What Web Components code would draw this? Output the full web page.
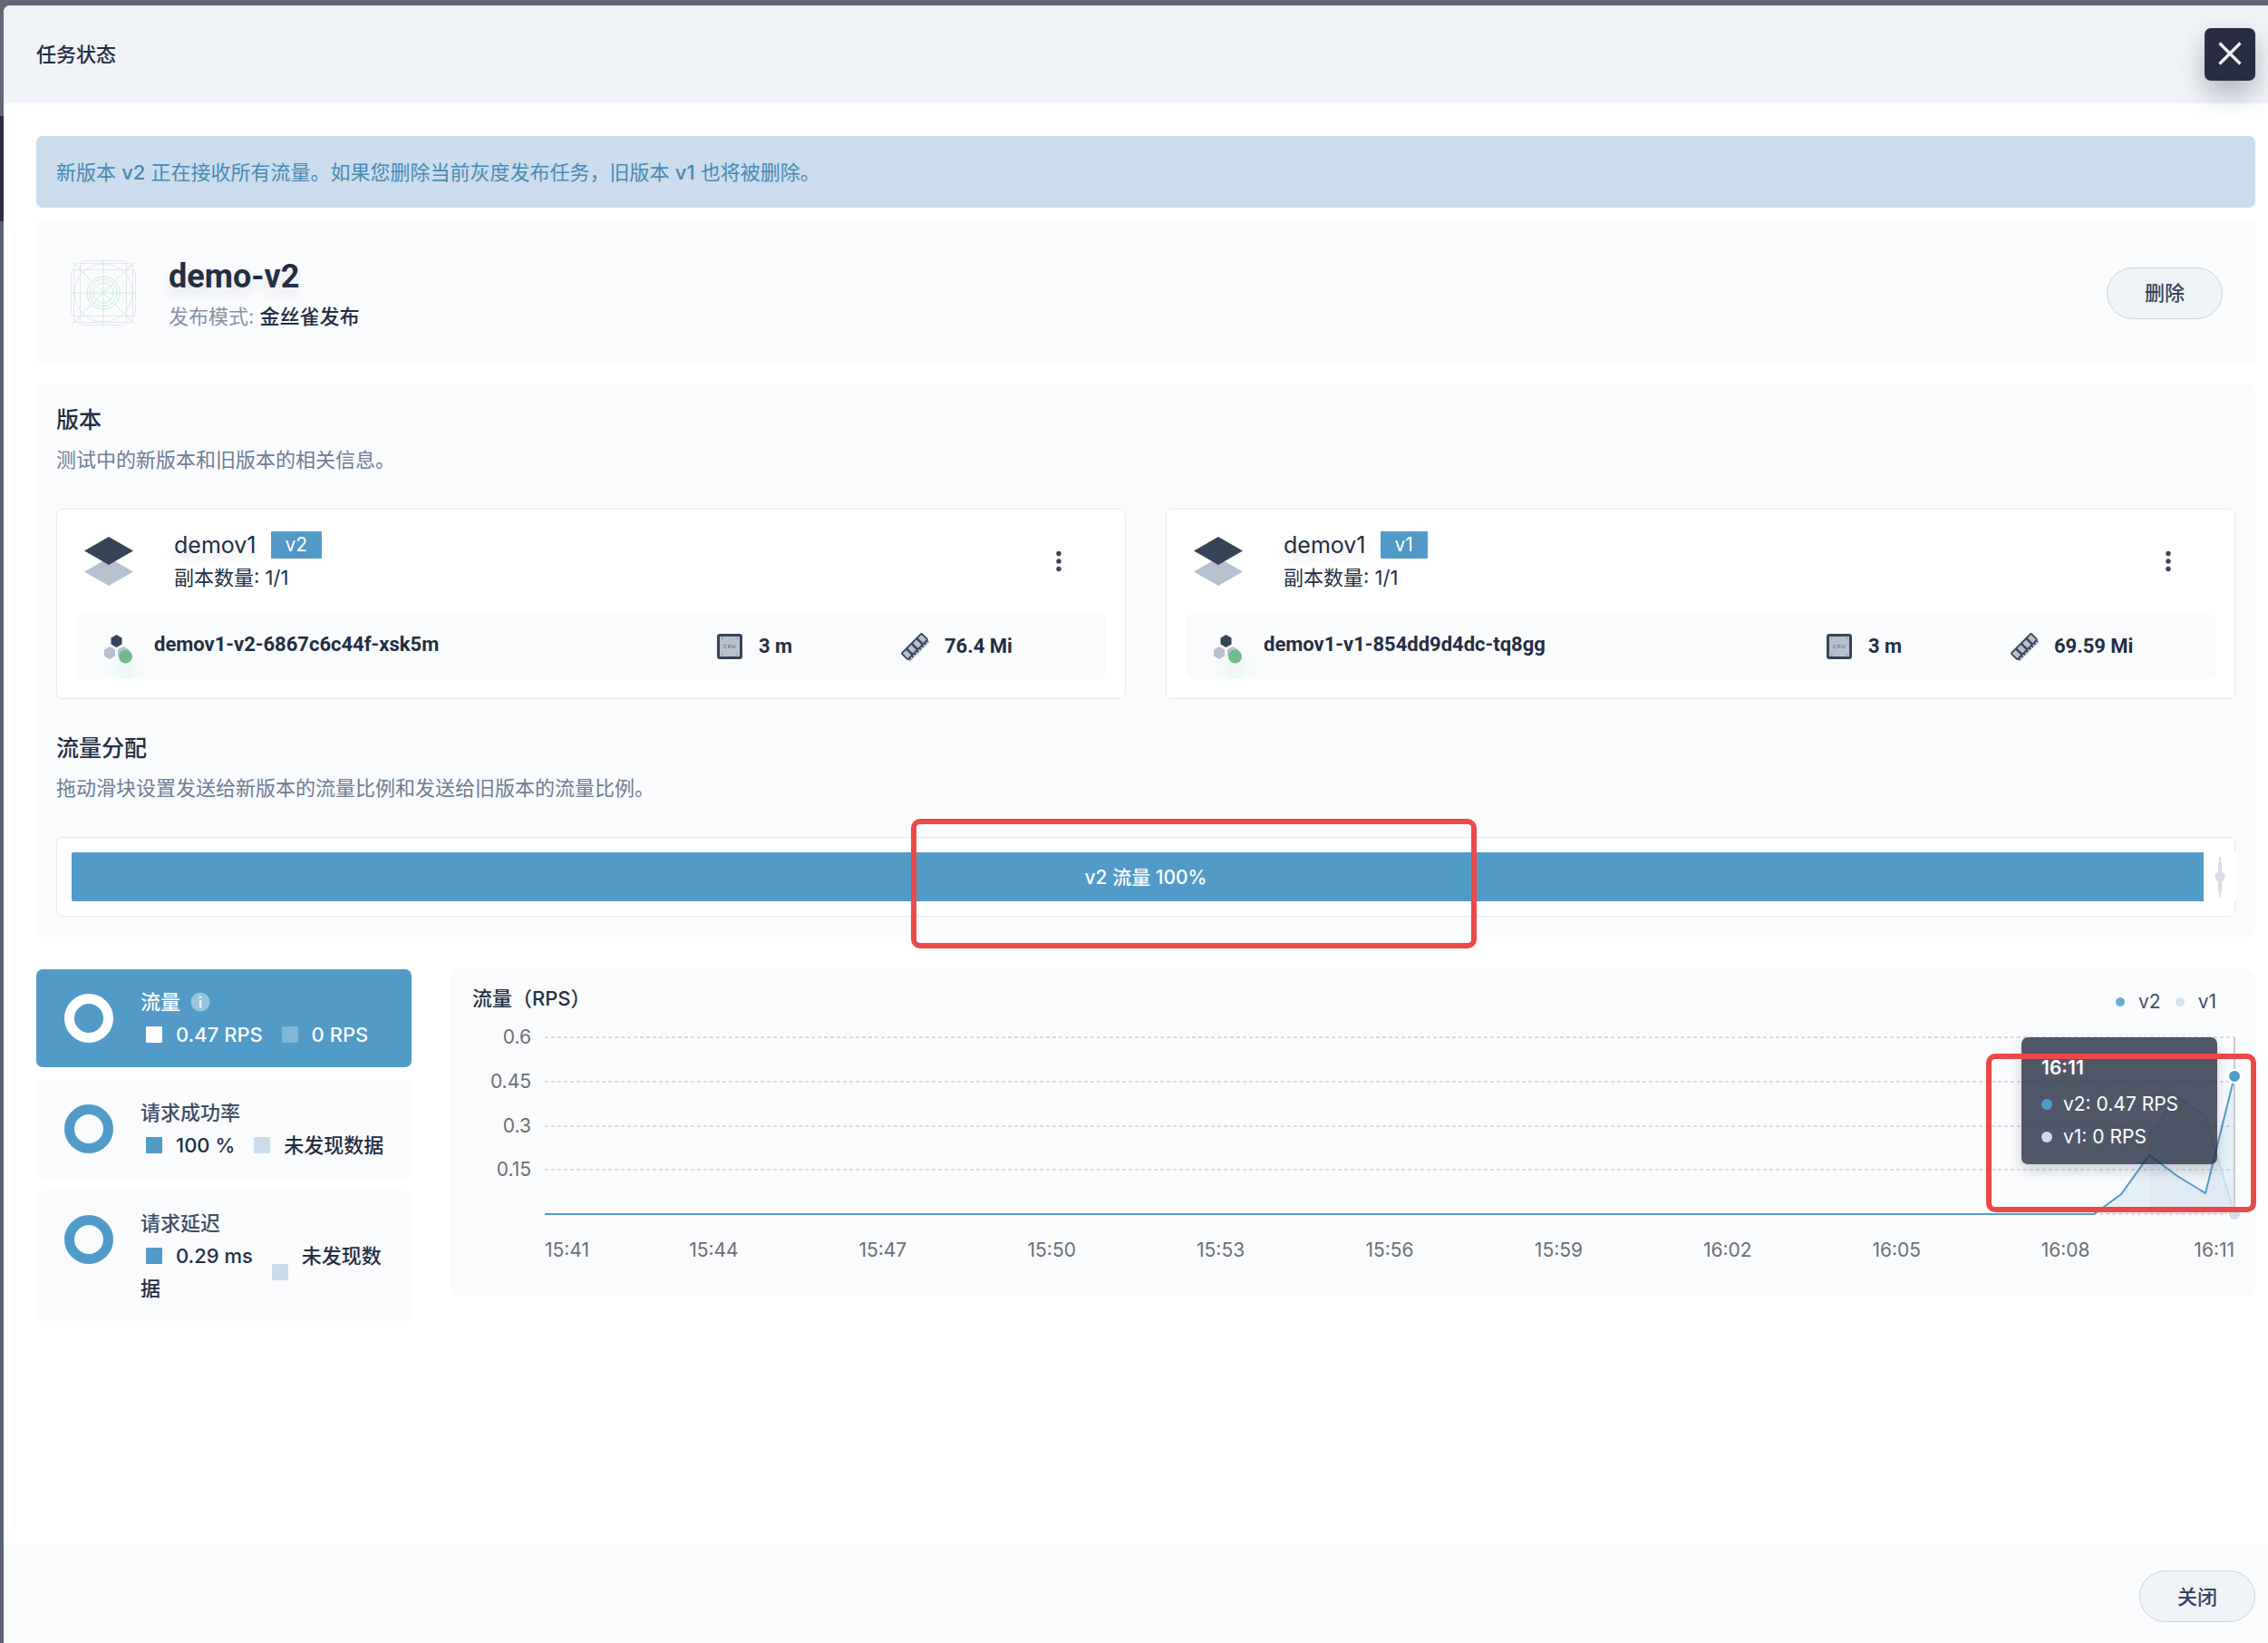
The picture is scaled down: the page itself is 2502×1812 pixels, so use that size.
<!DOCTYPE html>
<html lang="zh-CN">
<head>
<meta charset="utf-8">
<title>任务状态</title>
<style>
  :root {
    --ink: #242e42;
    --muted: #6f7c95;
    --blue: #529bc8;
    --pale: #cbdcec;
    --panel: #f9fbfd;
    --line: #e3e9ef;
    --latin: Roboto, "Noto Sans CJK SC", sans-serif;
  }
  body {
    margin: 0;
    background: linear-gradient(#626776 0 128px, #282d40 128px 244px, #5c6275 244px);
    color: var(--ink);
    font: 400 22px/36px Inter, "Noto Sans CJK SC", sans-serif;
  }
</style>
</head>
<body>
<task-dialog>
  <span slot="title">任务状态</span>
  <app-button slot="actions">关闭</app-button>

  <notice-bar>新版本 <b>v2</b> 正在接收所有流量。如果您删除当前灰度发布任务，旧版本 <b>v1</b> 也将被删除。</notice-bar>

  <task-summary name="demo-v2" mode="金丝雀发布">
    <app-button>删除</app-button>
  </task-summary>

  <panel-box>
    <section-block heading="版本" description="测试中的新版本和旧版本的相关信息。">
      <version-list>
        <version-card name="demov1" tag="v2" replicas="1/1">
          <pod-row name="demov1-v2-6867c6c44f-xsk5m" cpu="3 m" memory="76.4 Mi"></pod-row>
        </version-card>
        <version-card name="demov1" tag="v1" replicas="1/1">
          <pod-row name="demov1-v1-854dd9d4dc-tq8gg" cpu="3 m" memory="69.59 Mi"></pod-row>
        </version-card>
      </version-list>
    </section-block>
    <section-block heading="流量分配" description="拖动滑块设置发送给新版本的流量比例和发送给旧版本的流量比例。">
      <traffic-slider value="100" version="v2"></traffic-slider>
    </section-block>
  </panel-box>

  <metrics-area>
    <metric-card slot="side" active heading="流量" current="0.47 RPS" previous="0 RPS"></metric-card>
    <metric-card slot="side" heading="请求成功率" current="100 %" previous="未发现数据"></metric-card>
    <metric-card slot="side" heading="请求延迟" current="0.29 ms" previous="未发现数据"></metric-card>
    <traffic-chart heading="流量（RPS）">
      <chart-tooltip slot="tooltip" time="16:11" v2="0.47 RPS" v1="0 RPS"></chart-tooltip>
    </traffic-chart>
  </metrics-area>
</task-dialog>

<script>
const define = (name, render) => customElements.define(name, class extends HTMLElement {
  constructor() {
    super();
    this.attachShadow({ mode: 'open' });
  }
  connectedCallback() {
    this.shadowRoot.innerHTML = render(this, key => this.getAttribute(key));
  }
});

define('task-dialog', () => `
  <style>
    :host { display: flex; flex-direction: column; box-sizing: border-box; min-height: calc(100vh - 6px);
      margin: 6px 0 0 4px; background: #fff; border-radius: 7px 0 0 0; overflow: hidden; }
    header { display: flex; align-items: center; justify-content: space-between; box-sizing: border-box;
      height: 108px; padding: 0 14px 0 36px; background: #eff3f8; }
    h1 { margin: 0; font-size: 22px; font-weight: 500; line-height: 36px; }
    .close { display: grid; place-items: center; width: 56px; height: 58px; padding: 0; border: 0; border-radius: 7px;
      background: #282d40; box-shadow: 0 14px 29px rgba(36,46,66,.3); cursor: pointer; }
    main { display: flex; flex-direction: column; flex: 1; padding: 36px 14px 36px 36px; }
    footer { display: flex; justify-content: flex-end; box-sizing: border-box; height: 109px; padding: 29px 14px 0 0;
      background: var(--panel); }
  </style>
  <header>
    <h1><slot name="title"></slot></h1>
    <button class="close" type="button" aria-label="关闭窗口">
      <svg width="28" height="30" viewBox="0 0 28 30" stroke="#efefef" stroke-width="3.400" stroke-linecap="butt"><path d="M2.500 2.500 25.500 25.500M25.500 2.500 2.500 25.500"/></svg>
    </button>
  </header>
  <main><slot></slot></main>
  <footer><slot name="actions"></slot></footer>`);

define('app-button', () => `
  <style>
    :host { display: block; }
    button { width: 128px; height: 57px; padding: 0; border: 1px solid #ccd3db; border-radius: 29px;
      background: #eff3f8; color: #36435c; font: inherit; font-weight: 500; cursor: pointer; }
  </style>
  <button type="button"><slot></slot></button>`);

define('notice-bar', () => `
  <style>
    :host { display: block; padding: 23px 22px 21px; margin-bottom: 15px; border-radius: 7px; background: var(--pale); color: #478ab3; line-height: 35px; }
    ::slotted(b) { font-weight: 500; }
  </style>
  <slot></slot>`);

define('task-summary', (el, a) => `
  <style>
    :host { display: flex; align-items: center; box-sizing: border-box; height: 158px; padding: 0 36px 0 38px;
      margin-bottom: 22px; border-radius: 7px; background: var(--panel); }
    .text { flex: 1; margin-left: 36px; padding-top: 4px; }
    h2 { margin: 0 0 4px; font: 700 36px/44px var(--latin); text-shadow: 0 7px 14px rgba(36,46,66,.12); }
    p { margin: 0; color: #8591a5; }
    strong { color: var(--ink); font-weight: 500; }
  </style>
  <svg width="72" height="72" viewBox="0 0 72 72" fill="none" stroke="#e2e5ea">
    <rect x="10.500" y=".5" width="51" height="71" rx="4"/>
    <rect x=".5" y="10.500" width="71" height="51" rx="4"/>
    <rect x="3.500" y="3.500" width="65" height="65" rx="4"/>
    <circle cx="36" cy="36" r="32"/>
    <g stroke="#cdebdc">
      <circle cx="36" cy="36" r="18"/><circle cx="36" cy="36" r="15"/><circle cx="36" cy="36" r="11"/>
      <path d="M2 2 70 70M70 2 2 70M36 0v72M0 36h72"/>
    </g>
  </svg>
  <div class="text">
    <h2>${a('name')}</h2>
    <p>发布模式: <strong>${a('mode')}</strong></p>
  </div>
  <slot></slot>`);

define('panel-box', () => `
  <style>
    :host { display: flex; flex-direction: column; gap: 36px; padding: 21px 22px 22px; margin-bottom: 36px;
      border-radius: 7px; background: var(--panel); }
  </style>
  <slot></slot>`);

define('section-block', (el, a) => `
  <style>
    :host { display: block; }
    h3 { margin: 0; font-size: 25px; font-weight: 500; line-height: 36px; }
    p { margin: 8px 0 36px; color: var(--muted); }
  </style>
  <h3>${a('heading')}</h3>
  <p>${a('description')}</p>
  <slot></slot>`);

define('version-list', () => `
  <style>
    :host { display: flex; gap: 44px; }
    ::slotted(version-card) { flex: 1; min-width: 0; }
  </style>
  <slot></slot>`);

define('version-card', (el, a) => `
  <style>
    :host { display: block; padding: 21px; border: 1px solid var(--line); border-radius: 7px; background: #fff; }
    .head { display: flex; align-items: center; height: 72px; margin-bottom: 22px; }
    .text { flex: 1; margin-left: 36px; }
    .name { display: flex; align-items: center; gap: 16px; font-size: 25px; text-shadow: 0 7px 14px rgba(36,46,66,.15); }
    .tag { padding: 0 16px; background: var(--blue); color: #fff; font-size: 21px; line-height: 30px; border-radius: 1px; }
    .more { display: grid; place-items: center; width: 36px; height: 36px; margin-right: 34px; padding: 0; border: 0; background: none; cursor: pointer; }
  </style>
  <div class="head">
    <svg width="72" height="72" viewBox="0 0 72 72">
      <path fill="#b7c0ce" d="M36 32 63 47.500 36 63 9 47.500z"/>
      <path fill="#374457" d="M36 9 63 24.500 36 40 9 24.500z"/>
    </svg>
    <div class="text">
      <div class="name">${a('name')}<span class="tag">${a('tag')}</span></div>
      <div>副本数量: ${a('replicas')}</div>
    </div>
    <button class="more" type="button" aria-label="更多操作">
      <svg width="6" height="24" viewBox="0 0 6 24" fill="#374457"><circle cx="3" cy="3.500" r="2.700"/><circle cx="3" cy="12" r="2.700"/><circle cx="3" cy="20.500" r="2.700"/></svg>
    </button>
  </div>
  <slot></slot>`);

define('pod-row', (el, a) => `
  <style>
    :host { display: grid; grid-template-columns: 1fr 204px 225px; align-items: center; height: 72px;
      border-radius: 7px; background: var(--panel); font-family: var(--latin); font-weight: 700; overflow: hidden; }
    div { display: flex; align-items: center; }
    .pod { padding-left: 24px; gap: 22px; }
    .use { gap: 18px; }
    svg { overflow: visible; }
    .dot { filter: drop-shadow(0 14px 9px rgba(85,188,138,.25)); }
    .pod span { padding-bottom: 4px; }
  </style>
  <div class="pod">
    <svg width="40" height="40" viewBox="0 0 40 40">
      <path fill="#374457" d="M20.500 7 26.500 10.500v7L20.500 21l-6-3.500v-7z"/>
      <path fill="#b7c0ce" d="M13 20 19 23.500v7L13 34l-6-3.500v-7zM28 20 34 23.500v7L28 34l-6-3.500v-7z"/>
      <circle class="dot" cx="30.500" cy="31" r="7.500" fill="#70ba8e"/>
    </svg>
    <span>${a('name')}</span>
  </div>
  <div class="use">
    <svg width="28" height="28" viewBox="0 0 28 28">
      <rect x="1.500" y="1.500" width="25" height="25" rx="1.500" fill="#b7c0ce" stroke="#374457" stroke-width="3"/>
      <path d="M5 5h1.500M21.500 5H23M5 23h1.500M21.500 23H23" stroke="#7d899b" stroke-width="1.500"/>
      <path d="M10.500 12.500H8v3h2.500M12.500 16v-3.500h2.500v2h-2.500M17 12v3.500h2.500V12" fill="none" stroke="#7d899b"/>
    </svg>
    <span>${a('cpu')}</span>
  </div>
  <div class="use">
    <svg width="29" height="29" viewBox="0 0 29 29">
      <g transform="rotate(-45 14.500 14.500)">
        <path d="M-1 20.500H30" stroke="#b7c0ce" stroke-width="3"/>
        <rect x="-1" y="9" width="31" height="9.500" rx="1" fill="#b7c0ce" stroke="#374457" stroke-width="1.800"/>
        <path d="M6.500 9v9.500M14.500 9v9.500M22.500 9v9.500" stroke="#374457" stroke-width="2.500"/>
        <path d="M0 20H29" stroke="#374457" stroke-width="1.800" stroke-dasharray="2 2"/>
      </g>
    </svg>
    <span>${a('memory')}</span>
  </div>`);

define('mark-box', () => `
  <style>
    :host { display: block; position: absolute; box-sizing: border-box; border: 6px solid #ec4848; border-radius: 10px; pointer-events: none; z-index: 3; }
  </style>`);

define('traffic-slider', (el, a) => `
  <style>
    :host { display: block; position: relative; box-sizing: border-box; height: 88px; padding: 16px 0 16px 16px;
      border: 1px solid var(--line); border-radius: 7px; background: #fff; }
    label { display: grid; margin-right: -2px; }
    label > * { grid-area: 1 / 1; }
    input { appearance: none; box-sizing: border-box; width: 100%; height: 54px; margin: 0; border-radius: 2px;
      background: var(--blue); cursor: pointer; }
    input::-webkit-slider-thumb { appearance: none; width: 36px; height: 54px; border: 0; border-radius: 0;
      background:
        radial-gradient(circle at 18px 27px, #d8dde5 5px, transparent 6px),
        linear-gradient(#d8dde5, #d8dde5) 17px 5px / 2px 44px no-repeat,
        linear-gradient(#d8dde5, #d8dde5) 16px 11px / 4px 32px no-repeat,
        #fff; }
    span { align-self: center; justify-self: center; padding: 2px 18px 0 0; color: #fff; font-size: 21px; font-weight: 500; pointer-events: none; z-index: 1; }
    mark-box { left: 39.200%; top: -21px; width: 26%; height: 143px; }
  </style>
  <label>
    <input type="range" min="0" max="100" value="${a('value')}">
    <span>${a('version')} 流量 ${a('value')}%</span>
  </label>
  <mark-box></mark-box>`);

define('metrics-area', () => `
  <style>
    :host { display: flex; align-items: flex-start; gap: 43px; }
    .side { display: flex; flex-direction: column; flex: none; gap: 14px; width: 414px; }
    .chart { flex: 1; min-width: 0; }
  </style>
  <div class="side"><slot name="side"></slot></div>
  <div class="chart"><slot></slot></div>`);

define('metric-card', (el, a) => `
  <style>
    :host { display: flex; align-items: flex-start; gap: 30px; padding: 18px 18px 18px 31px; border-radius: 7px; background: var(--panel);
      --ring: var(--blue); --now: var(--blue); --old: var(--pale); }
    :host([active]) { background: var(--blue); color: #fff; --ring: #fff; --now: #fff; --old: #81b6d6; }
    .ring { flex: none; box-sizing: border-box; width: 54px; height: 54px; margin-top: 9px; border: 11px solid var(--ring); border-radius: 50%; }
    .title { display: flex; align-items: center; gap: 11px; color: #404e68; font-weight: 500; }
    :host([active]) .title { color: #fff; }
    .text { flex: 1; }
    .values { font-weight: 500; }
    .value { position: relative; margin-right: 9px; padding-left: 39px; }
    .value::before { content: ""; position: absolute; left: 6px; top: 50%; width: 18px; height: 18px; margin-top: -9px;
      border-radius: 1px; background: var(--now); }
    .old { margin-right: 0; }
    .old::before { background: var(--old); }
  </style>
  <div class="ring"></div>
  <div class="text">
    <div class="title">${a('heading')}${el.hasAttribute('active') ? `
      <svg width="22" height="22" viewBox="0 0 22 22"><circle cx="11" cy="11" r="10.500" fill="#97c3df"/><path d="M11 9v8.500M11 4.500v2.500" stroke="#e6f1f8" stroke-width="2.400"/></svg>` : ''}</div>
    <div class="values"><span class="value">${a('current')}</span> <span class="value old">${a('previous')}</span></div>
  </div>`);

define('chart-tooltip', (el, a) => `
  <style>
    :host { display: block; position: absolute; right: 19px; top: 0; box-sizing: border-box; width: 216px; height: 140px; padding: 16px 22px;
      border-radius: 7px; background: rgba(36,46,66,.8); box-shadow: 0 7px 14px rgba(36,46,66,.2); color: #fff; font-size: 21px; z-index: 2; }
    .time { font-weight: 600; }
    .row { display: flex; align-items: center; gap: 12px; }
    .time + .row { margin-top: 4px; }
    i { width: 12px; height: 12px; border-radius: 50%; }
  </style>
  <div class="time">${a('time')}</div>
  <div class="row"><i style="background:var(--blue)"></i>v2: ${a('v2')}</div>
  <div class="row"><i style="background:var(--pale)"></i>v1: ${a('v1')}</div>`);

define('traffic-chart', (el, a) => {
  const levels = ['0.6', '0.45', '0.3', '0.15', ''];
  const times = ['15:41', '15:44', '15:47', '15:50', '15:53', '15:56', '15:59', '16:02', '16:05', '16:08', '16:11'];
  const grid = [0, 49, 98, 146, 195].map(y => `<path d="M0 ${y}H1864"/>`).join('');
  return `
  <style>
    :host { display: block; padding: 14px 23px 32px 24px; border-radius: 7px; background: var(--panel); }
    .head { display: flex; justify-content: space-between; align-items: flex-start; height: 61px; }
    h4 { margin: 0; font-size: 22px; font-weight: 500; line-height: 36px; }
    .legend { display: flex; gap: 16px; padding: 4px 20px 0 0; color: #404e68; font-size: 21px; }
    .legend span { display: flex; align-items: center; gap: 15px; }
    .legend i { width: 10px; height: 10px; border-radius: 50%; }
    .body { display: grid; grid-template-columns: 65px 1fr; column-gap: 15px; color: #6b6f76; font-size: 21px; }
    .levels { display: flex; flex-direction: column; justify-content: space-between; height: 231px; margin: -18px 0; text-align: right; }
    .levels span { height: 36px; }
    .plot { position: relative; height: 195px; }
    .plot > svg { display: block; width: 100%; height: 195px; overflow: visible; }
    path { vector-effect: non-scaling-stroke; }
    .point { position: absolute; right: -8px; width: 12px; height: 12px; border: 2px solid #fff; border-radius: 50%; z-index: 1; }
    .times { grid-column: 2; display: flex; justify-content: space-between; margin-top: 22px; }
    .times span { flex: 2; text-align: center; }
    .times span:first-child { flex: 1; text-align: left; }
    .times span:last-child { flex: 1; text-align: right; }
    mark-box { right: -24px; top: 18px; width: 298px; height: 175px; }
  </style>
  <div class="head">
    <h4>${a('heading')}</h4>
    <div class="legend"><span><i style="background:#6aabd0"></i>v2</span><span><i style="background:#d3e3ef"></i>v1</span></div>
  </div>
  <div class="body">
    <div class="levels">${levels.map(l => `<span>${l}</span>`).join('')}</div>
    <div class="plot">
      <svg viewBox="0 0 1864 195" preserveAspectRatio="none" fill="none">
        <g stroke="#d9dce3" stroke-width="2" stroke-dasharray="4 3">${grid}</g>
        <path fill="#529bc8" fill-opacity=".12" d="M1709 195 1739 173 1770 130 1801 153 1832 172 1864 43V195z"/>
        <path fill="#cbdcec" fill-opacity=".22" d="M1770 195V109L1801 66 1832 88 1864 195z"/>
        <path stroke="#c9cbd0" stroke-width="2" d="M1864 0V195"/>
        <path stroke="#cbdcec" stroke-width="2" d="M1770 109 1801 66 1832 88 1864 195"/>
        <path stroke="#529bc8" stroke-width="2" d="M0 195H1709L1739 173 1770 130 1801 153 1832 172 1864 43"/>
      </svg>
      <div class="point" style="top:35px;background:var(--blue)"></div>
      <div class="point" style="top:187px;background:var(--pale)"></div>
      <slot name="tooltip"></slot>
      <mark-box></mark-box>
    </div>
    <div class="times">${times.map(t => `<span>${t}</span>`).join('')}</div>
  </div>`;
});
</script>
</body>
</html>
